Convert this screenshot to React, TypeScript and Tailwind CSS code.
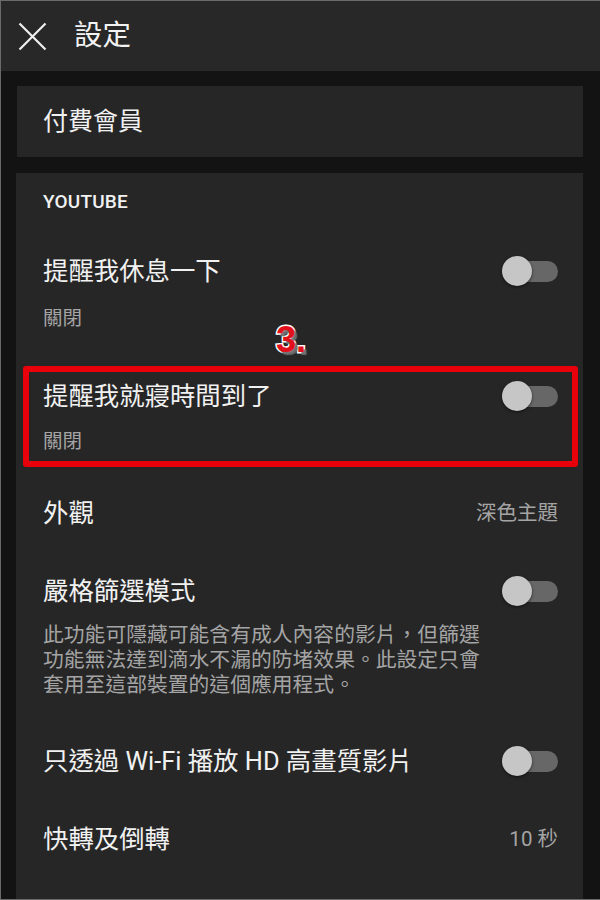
import React from "react";

function Toggle() {
  return (
    <div className="relative w-[51px] h-[21px] shrink-0">
      <div className="w-[51px] h-[21px] rounded-full bg-[#676767]" />
      <div className="absolute left-[-5px] top-[-4.5px] w-[30px] h-[30px] rounded-full bg-[#c6c6c6] shadow-[0_1px_3px_rgba(0,0,0,0.6)]" />
    </div>
  );
}

export default function App() {
  const font = "font-['Roboto','Noto_Sans_CJK_TC',sans-serif]";
  return (
    <div className={`w-[600px] h-[900px] overflow-hidden bg-[#131313] ${font} border-t border-l border-b border-[#6a6a6a]`}>
      {/* Header */}
      <div className="h-[70px] bg-[#282828] flex items-center pl-[17px]">
        <svg width="29" height="29" viewBox="0 0 29 29" className="shrink-0">
          <line x1="1.5" y1="1.5" x2="27.5" y2="27.5" stroke="#f1f1f1" strokeWidth="2.2" />
          <line x1="27.5" y1="1.5" x2="1.5" y2="27.5" stroke="#f1f1f1" strokeWidth="2.2" />
        </svg>
        <div className="ml-[27px] text-[28.5px] leading-[34px] text-[#f3f3f3]">設定</div>
      </div>

      {/* Premium card */}
      <div className="mt-[15px] mx-[16px] mr-[17px] h-[71px] bg-[#262626] flex items-center pl-[26px]">
        <div className="text-[25px] leading-[30px] text-[#f1f1f1]">付費會員</div>
      </div>

      {/* YouTube card */}
      <div className="relative mt-[16px] ml-[15px] mr-[17px] bg-[#262626] pb-[60px]">
        <div className="pt-[17px] pl-[27px] text-[19px] leading-[24px] font-medium text-[#f1f1f1] tracking-[0.2px]">
          YOUTUBE
        </div>

        {/* Row 1 */}
        <div className="mt-[42px] pl-[27px] pr-[25px] flex items-center justify-between">
          <div className="text-[25.4px] leading-[30px] text-[#f1f1f1]">提醒我休息一下</div>
          <Toggle />
        </div>
        <div className="mt-[21px] pl-[27px] text-[19.5px] leading-[24px] text-[#a4a4a4]">關閉</div>

        {/* Annotation "3." */}
        <div className="absolute left-[260px] top-[148px] text-[36px] leading-[38px] font-bold font-['Liberation_Sans',sans-serif] text-[#e3101c] [-webkit-text-stroke:3px_#ffffff] [paint-order:stroke_fill] [text-shadow:3px_3px_1px_rgba(110,110,110,0.95)]">
          3.
        </div>

        {/* Row 2 boxed */}
        <div className="mt-[35px] ml-[7px] mr-[5px] border-[6px] border-[#e8000b] rounded-[3px] pt-[9px] pb-[7px]">
          <div className="pl-[14px] pr-[14px] flex items-center justify-between">
            <div className="text-[25.4px] leading-[30px] text-[#f1f1f1]">提醒我就寢時間到了</div>
            <Toggle />
          </div>
          <div className="mt-[19px] pl-[14px] text-[19.5px] leading-[24px] text-[#a4a4a4]">關閉</div>
        </div>

        {/* Row 3 */}
        <div className="mt-[31px] pl-[27px] pr-[25px] flex items-center justify-between">
          <div className="text-[25.4px] leading-[30px] text-[#f1f1f1]">外觀</div>
          <div className="text-[20.5px] leading-[30px] text-[#a4a4a4]">深色主題</div>
        </div>

        {/* Row 4 */}
        <div className="mt-[48px] pl-[27px] pr-[25px] flex items-center justify-between">
          <div className="text-[25.4px] leading-[30px] text-[#f1f1f1]">嚴格篩選模式</div>
          <Toggle />
        </div>
        <div className="mt-[17px] pl-[27px] text-[20.8px] leading-[25px] text-[#a4a4a4]">
          此功能可隱藏可能含有成人內容的影片，但篩選
          <br />
          功能無法達到滴水不漏的防堵效果。此設定只會
          <br />
          套用至這部裝置的這個應用程式。
        </div>

        {/* Row 5 */}
        <div className="mt-[48px] pl-[27px] pr-[25px] flex items-center justify-between">
          <div className="text-[25.4px] leading-[30px] text-[#f1f1f1]">只透過 Wi-Fi 播放 HD 高畫質影片</div>
          <Toggle />
        </div>

        {/* Row 6 */}
        <div className="mt-[48px] pl-[27px] pr-[25px] flex items-center justify-between">
          <div className="text-[25.4px] leading-[30px] text-[#f1f1f1]">快轉及倒轉</div>
          <div className="text-[20.5px] leading-[30px] text-[#a4a4a4]">10 秒</div>
        </div>
      </div>
    </div>
  );
}
